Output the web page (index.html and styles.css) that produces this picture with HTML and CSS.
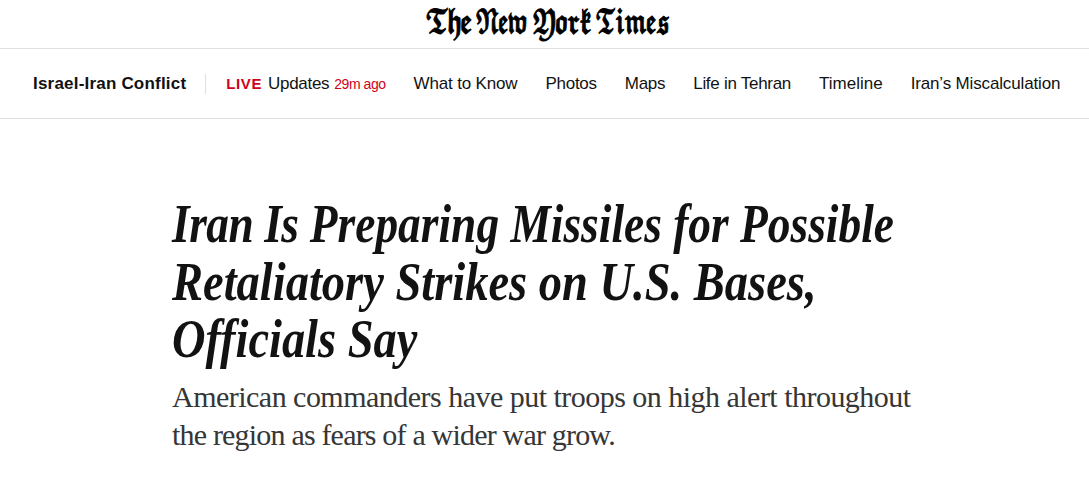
FILE: index.html
```html
<!DOCTYPE html>
<html lang="en">
<head>
    <meta charset="utf-8">
    <title>The New York Times</title>
    <link rel="stylesheet" href="styles.css">
</head>
<body>
    <header class="masthead">
        <svg class="logo" width="250" height="48" viewBox="0 0 250 48" role="img" aria-label="The New York Times">
            <text transform="translate(1 33) scale(0.74 1)">𝕿𝖍𝖊</text>
            <text transform="translate(51 33) scale(0.63 1)">𝕹𝖊𝖜</text>
            <text transform="translate(108 33) scale(0.69 1)">𝖄𝖔𝖗𝖐</text>
            <text transform="translate(171 33) scale(0.65 1)">𝕿𝖎𝖒𝖊𝖘</text>
        </svg>
    </header>
    <nav class="storyline">
        <a class="topic">Israel-Iran Conflict</a>
        <a class="updates"><span class="live">LIVE</span><span class="updates-label">Updates</span><span class="ago">29m ago</span></a>
        <a class="know">What to Know</a>
        <a class="photos">Photos</a>
        <a class="maps">Maps</a>
        <a class="life">Life in Tehran</a>
        <a class="timeline">Timeline</a>
        <a class="miscalc">Iran’s Miscalculation</a>
    </nav>
    <main class="article">
        <h1 class="headline">
            <span class="line line-1"><span class="lead">Iran Is</span> Preparing Missiles for Possible</span>
            <span class="line line-2">Retaliatory Strikes on U.S. Bases,</span>
            <span class="line line-3">Officials Say</span>
        </h1>
        <p class="summary">
            <span class="line sum-1">American commanders have put troops on high alert throughout</span>
            <span class="line sum-2">the region as fears of a wider war grow.</span>
        </p>
    </main>
</body>
</html>
```

FILE: styles.css
```css
body {
    margin: 0;
    background: #fff;
    color: #121212;
    font-family: "Liberation Sans", Arial, sans-serif;
}

.masthead {
    height: 48px;
    border-bottom: 1px solid #dfdfdf;
    padding-left: 424px;
}

.logo {
    display: block;
    font-family: "DejaVu Math TeX Gyre", "DejaVu Sans", serif;
    font-size: 32px;
    letter-spacing: -3px;
    fill: #000;
    stroke: #000;
    stroke-width: 1.1px;
}

.storyline {
    height: 69px;
    border-bottom: 1px solid #dfdfdf;
    padding-left: 33px;
    display: flex;
    align-items: center;
    gap: 28px;
    font-size: 17px;
    line-height: 20px;
    white-space: nowrap;
}

.topic {
    font-weight: bold;
    letter-spacing: 0.2px;
    padding-right: 19px;
    margin-right: -8px;
    border-right: 1px solid #dfdfdf;
}

.live {
    color: #d0021b;
    font-weight: bold;
    font-size: 15px;
    letter-spacing: 0.6px;
}

.updates-label {
    margin: 0 5px 0 6px;
    letter-spacing: -0.3px;
}

.ago {
    color: #d0021b;
    font-size: 14px;
    letter-spacing: -0.45px;
}

.know {
    letter-spacing: -0.16px;
}

.photos, .maps, .life {
    letter-spacing: -0.28px;
}

.miscalc {
    letter-spacing: -0.15px;
}

.article {
    padding: 77px 0 0 172px;
}

.line {
    display: block;
    white-space: nowrap;
}

.headline {
    margin: 0;
    font-family: "Liberation Serif", "Times New Roman", serif;
    font-style: italic;
    font-weight: bold;
    font-size: 54px;
    line-height: 57.6px;
}

.headline .line {
    width: max-content;
    transform-origin: 0 50%;
}

.lead {
    letter-spacing: -0.6px;
}

.line-1 {
    transform: scaleX(0.841);
}

.line-2 {
    transform: scaleX(0.861);
}

.line-3 {
    transform: scaleX(0.859);
}

.summary {
    margin: 9px 0 0;
    font-family: "Liberation Serif", "Times New Roman", serif;
    font-size: 30px;
    line-height: 38px;
    color: #363636;
}

.sum-1 {
    letter-spacing: -0.52px;
}

.sum-2 {
    letter-spacing: -0.81px;
}
```
